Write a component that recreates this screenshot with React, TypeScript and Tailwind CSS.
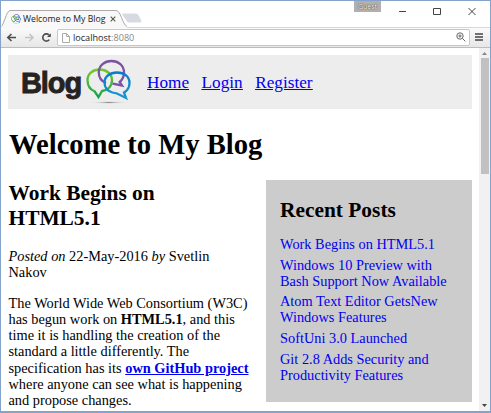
import React from "react";

const posts = [
  ["Work Begins on HTML5.1"],
  ["Windows 10 Preview with", "Bash Support Now Available"],
  ["Atom Text Editor GetsNew", "Windows Features"],
  ["SoftUni 3.0 Launched"],
  ["Git 2.8 Adds Security and", "Productivity Features"],
];

function Bubbles({ className, strokeWidth = 2.3 }: { className: string; strokeWidth?: number }) {
  return (
    <svg className={className} viewBox="0 0 46 46" fill="none" strokeWidth={strokeWidth} strokeLinejoin="miter">
      <defs>
        <radialGradient id="shadow">
          <stop offset="0" stopColor="#888" />
          <stop offset="1" stopColor="#eee" stopOpacity="0" />
        </radialGradient>
        <linearGradient id="green" x1="0" y1="0" x2="0" y2="1">
          <stop offset="0" stopColor="#73c928" />
          <stop offset="1" stopColor="#16a34e" />
        </linearGradient>
        <linearGradient id="blue" x1="0" y1="0" x2="0" y2="1">
          <stop offset="0" stopColor="#087bd0" />
          <stop offset="1" stopColor="#1598d3" />
        </linearGradient>
      </defs>
      <ellipse cx="23" cy="43.500" rx="20" ry="1.400" fill="url(#shadow)" />
      <path d="M8.500 32.300C4 30.500 1.500 26 1.500 21C1.500 14.500 7 10.500 13.500 10.500C20.500 10.500 26 15 26 21C26 27 22 31 16 32L12.500 38Z" stroke="url(#green)" />
      <path d="M20 24C15 22 12.800 18 12.800 13.500C12.800 6.500 18.500 2 25.500 2C32.500 2 38 6.500 38 13.500C38 18 36.200 21 33.700 23L36 26.500L26.500 24.700" stroke="#7953a4" />
      <path d="M26.500 33.500C21.500 32 18.500 28 18.500 23.500C18.500 17.500 24 13.500 31 13.500C38.500 13.500 43.500 17.500 43.500 24C43.500 28.500 41.500 31.500 38 33.500L40 39L31 34.500Z" stroke="url(#blue)" />
    </svg>
  );
}

function BrowserTop() {
  return (
    <header className="relative h-[47px] shrink-0 bg-white">
      <div className="flex h-[27px] items-end border-b border-[#d8d8d8]">
        <div className="relative ml-[2px] flex h-[17px] w-[123px] items-center pl-[8px]">
          <svg className="absolute -left-[2px] top-0 h-[18px] w-[145px]" viewBox="0 0 145 18" fill="none">
            <path d="M0 16.5C3 15 5 1.500 9 .500H115C120 .500 121 14 126 16.500V18H0Z" fill="#f8f8f8" />
            <path d="M0 16.5C3 15 5 1.500 9 .500H115C120 .500 121 14 126 16.500" stroke="#aaa" />
            <path d="M121 4.500Q121 3.500 123 3.500H135Q137 3.500 138 6L140 10Q141 12.500 139 12.500H128Q126 12.500 125 10Z" fill="#d6dbe3" />
          </svg>
          <Bubbles className="relative h-[10px] w-[10px]" strokeWidth={4} />
          <span className="relative ml-[2px] w-[84px] whitespace-nowrap font-['Open_Sans',sans-serif] text-[8.7px] leading-3 text-[#222]">Welcome to My Blog</span>
          <svg className="relative ml-[3px] h-[6px] w-[6px]" viewBox="0 0 6 6"><path d="M.7.7L5.300 5.300M5.300.700L.700 5.300" stroke="#555" strokeWidth="1.100" /></svg>
        </div>
        <div className="absolute left-[353px] top-0 flex h-[11px] w-[27px] items-center justify-center bg-[#b0b0b0] font-['Open_Sans',sans-serif] text-[7px] leading-none text-white [text-shadow:0_0_1px_#333,0_0_1px_#333]">Guest</div>
        <svg className="absolute left-[394px] top-0 h-5 w-[90px]" viewBox="0 0 90 20" fill="none" stroke="#444">
          <path d="M4 10.500h7M73.500 7l7 7M80.500 7l-7 7M38.500 7.500h7v6h-7z" />
        </svg>
      </div>
      <div className="flex h-[20px] items-center border-b border-[#bdbdbd] bg-gradient-to-b from-[#fafafa] to-[#e7e7e7]">
        <svg className="h-[18px] w-[56px] shrink-0" viewBox="0 0 56 18" fill="none" strokeWidth="1.600">
          <path d="M6.500 8.500H15M10.500 5L6.800 8.500L10.500 12" stroke="#4c4c4c" />
          <path d="M24 8.500h8M28.500 5L32 8.500l-3.500 3.500" stroke="#c5c5c5" />
          <path d="M48 6A3.600 3.600 0 1 0 48.300 10.600" stroke="#4c4c4c" /><path d="M46 8h3.800V4.300z" fill="#4c4c4c" />
        </svg>
        <div className="flex h-[17px] w-[413px] items-center rounded-[2px] border border-[#c8c8c8] bg-white pl-[4px] pr-[3px]">
          <svg className="h-[10px] w-2" viewBox="0 0 8 10" fill="none" stroke="#aaa"><path d="M.5.5h4l3 3v6h-7zM4.500.500v3h3" /></svg>
          <span className="ml-[3px] font-['Open_Sans',sans-serif] text-[9.100px] leading-3 text-[#222]">localhost<span className="text-[#888]">:8080</span></span>
          <svg className="-mt-px ml-auto h-[10px] w-[10px]" viewBox="0 0 10 10" fill="none" stroke="#666"><circle cx="4" cy="4" r="3.200" /><path d="M2.300 4h3.400M4 2.300v3.400M6.300 6.300L9.300 9.300" /></svg>
        </div>
        <svg className="-mt-px ml-[5px] h-[10px] w-2" viewBox="0 0 8 10" stroke="#444" strokeWidth="1.700"><path d="M0 2h8M0 5h8M0 8h8" /></svg>
      </div>
    </header>
  );
}

export default function App() {
  return (
    <div className="flex h-[413px] w-[491px] flex-col overflow-hidden border border-b-2 border-[#83a3ca] bg-white font-['Liberation_Serif',serif] text-black">
      <BrowserTop />
      <div className="flex min-h-0 flex-1">
        <main className="w-[478px] shrink-0 overflow-hidden pl-[7px] pt-[7px]">
          <nav className="flex h-[54px] w-[464px] items-center bg-[#ededed]">
            <div className="flex w-[139px] shrink-0 items-center pl-[13px]">
              <span className="w-[62px] shrink-0 pt-[3px] font-['Liberation_Sans',sans-serif] text-[29px] font-bold leading-none tracking-[-1.100px] text-[#25221f] [-webkit-text-stroke:0.900px_#25221f]">Blog</span>
              <Bubbles className="ml-[3px] h-[46px] w-[46px] shrink-0" />
            </div>
            <div className="flex gap-[12.600px] pt-[1px] text-[17.200px] leading-5 text-[#0000ee] underline">
              <a>Home</a><a>Login</a><a>Register</a>
            </div>
          </nav>
          <h1 className="ml-px mt-[19px] whitespace-nowrap text-[28.600px] font-bold leading-[34px]">Welcome to My Blog</h1>
          <div className="mt-[18px] flex">
            <article className="w-[258px] shrink-0 whitespace-nowrap pl-[0.500px] text-[14.350px] leading-[16.1px]">
              <h2 className="pt-px text-[21.400px] font-bold leading-[25px]">Work Begins on<br />HTML5.1</h2>
              <p className="mt-[17px]"><i>Posted on</i> 22-May-2016 <i>by</i> Svetlin<br />Nakov</p>
              <p className="mt-[15px]">The World Wide Web Consortium (W3C)<br />has begun work on <b>HTML5.1</b>, and this<br />time it is handling the creation of the<br />standard a little differently. The<br />specification has its <a className="font-bold text-[#0000ee] underline">own GitHub project</a><br />where anyone can see what is happening<br />and propose changes.</p>
            </article>
            <aside className="h-[222px] w-[206px] bg-[#ccc] pl-[14px] pt-[18px]">
              <h2 className="text-[21.400px] font-bold leading-[25px]">Recent Posts</h2>
              <ul className="mt-[13px] flex flex-col gap-[4.5px] whitespace-nowrap text-[14.350px] leading-[16.1px] text-[#0000ee]">
                {posts.map((post) => <li key={post[0]}>{post.map((line) => <span className="block" key={line}>{line}</span>)}</li>)}
              </ul>
            </aside>
          </div>
        </main>
        <div className="flex flex-1 flex-col items-center bg-[#f1f1f1]">
          <svg className="h-[10px] w-[9px] shrink-0" viewBox="0 0 9 10"><path d="M2 7L4.500 4L7 7z" fill="#888" /></svg>
          <div className="h-[116px] w-2 shrink-0 bg-[#c1c1c1]" />
          <svg className="mt-auto h-[10px] w-[9px]" viewBox="0 0 9 10"><path d="M2 3L4.500 6L7 3z" fill="#444" /></svg>
        </div>
      </div>
    </div>
  );
}
